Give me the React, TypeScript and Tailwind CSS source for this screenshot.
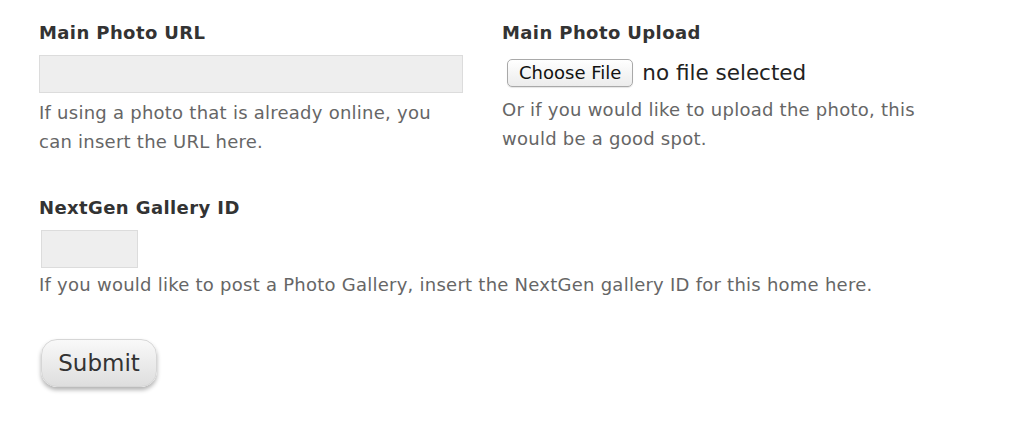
export default function App() {
  return (
    <div
      className="min-h-[426px] bg-white pl-[39px] pt-[20px] text-[#333]"
      style={{ fontFamily: '"DejaVu Sans", "Open Sans", sans-serif' }}
    >
      <div className="flex gap-[39px]">
        {/* Main photo URL */}
        <div className="w-[424px]">
          <label className="block text-[18px] font-bold leading-[26px] tracking-[0.4px] text-[#333]">
            Main Photo URL
          </label>
          <input
            type="text"
            className="mt-[9px] block h-[38px] w-[424px] border border-[#dcdcdc] bg-[#eeeeee] outline-none"
          />
          <p className="mt-[5px] text-[18px] leading-[29px] tracking-[0.25px] text-[#666]">
            If using a photo that is already online, you can insert the URL here.
          </p>
        </div>

        {/* Main photo upload */}
        <div className="w-[424px]">
          <label className="block text-[18px] font-bold leading-[26px] tracking-[0.4px] text-[#333]">
            Main Photo Upload
          </label>
          <div className="mt-[13px] flex items-center gap-[9px]">
            <button
              type="button"
              className="ml-[5px] h-[28px] rounded-[5px] border border-[#a9a9a9] bg-gradient-to-b from-white to-[#ececec] px-[11px] text-[18px] leading-none text-[#111] shadow-[0_1px_1px_rgba(0,0,0,0.1)]"
            >
              Choose File
            </button>
            <span className="text-[21.5px] leading-none text-[#222]">no file selected</span>
          </div>
          <p className="mt-[8px] text-[18px] leading-[29px] tracking-[0.25px] text-[#666]">
            Or if you would like to upload the photo, this would be a good spot.
          </p>
        </div>
      </div>

      {/* NextGen gallery */}
      <div className="mt-[39px]">
        <label className="block text-[18px] font-bold leading-[26px] tracking-[0.4px] text-[#333]">
          NextGen Gallery ID
        </label>
        <input
          type="text"
          className="ml-[2px] mt-[9px] block h-[38px] w-[97px] border border-[#dcdcdc] bg-[#eeeeee] outline-none"
        />
        <p className="mt-[2px] text-[18px] leading-[29px] tracking-[0.25px] text-[#666]">
          If you would like to post a Photo Gallery, insert the NextGen gallery ID for this home here.
        </p>
      </div>

      <button
        type="button"
        className="ml-[2px] mt-[40px] h-[48px] w-[116px] rounded-[16px] border border-[#d6d6d6] bg-gradient-to-b from-[#f9f9f9] to-[#dedede] text-[23px] text-[#333] shadow-[0_3px_4px_rgba(0,0,0,0.3)]"
      >
        Submit
      </button>
    </div>
  );
}
